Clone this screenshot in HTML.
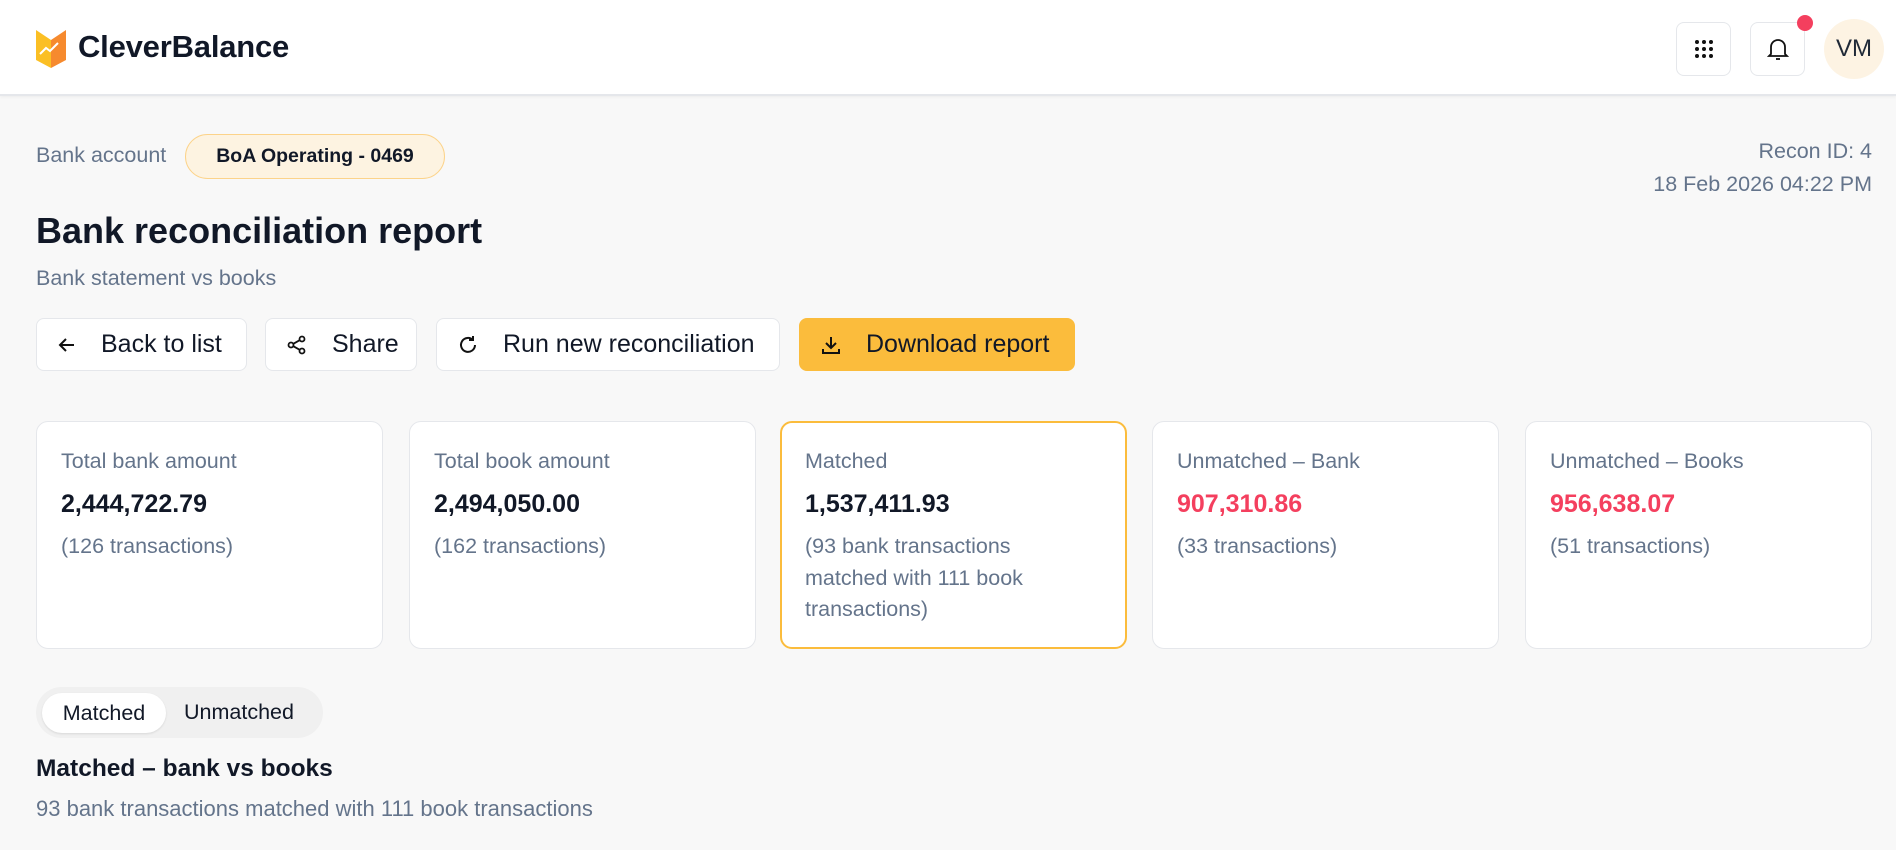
<!DOCTYPE html>
<html><head><meta charset="utf-8"><style>
*{box-sizing:border-box;margin:0;padding:0}
body{width:1896px;height:850px;overflow:hidden;background:#f8f8f8;font-family:"Liberation Sans",sans-serif;color:#111827}
.hdr{position:absolute;left:0;top:0;width:1896px;height:96px;background:#fff;border-bottom:2px solid #e5e7eb;box-shadow:0 1px 3px rgba(0,0,0,.05)}
.abs{position:absolute}
.ib{position:absolute;top:22px;width:55px;height:54px;border:1px solid #e5e7eb;border-radius:8px;background:#fff;display:flex;align-items:center;justify-content:center}
.gray{color:#64748b}
.btn{position:absolute;top:318px;height:53px;border:1px solid #e5e7eb;border-radius:8px;background:#fff;display:flex;align-items:center;font-size:25px;color:#111827}
.btn svg{margin:0 24px 0 20px}
.card{position:absolute;top:421px;width:347px;height:228px;background:#fff;border:1px solid #e5e7eb;border-radius:12px;padding:25px 24px}
.card .l{font-size:21.5px;color:#64748b;margin-top:2px}
.card .v{font-size:25px;font-weight:600;margin-top:16px}
.card .s{font-size:21.5px;color:#64748b;margin-top:12px;line-height:31.5px}
.red{color:#f43f5e}
</style></head><body>
<div class="hdr">
<svg class="abs" style="left:36px;top:30px" width="30" height="38" viewBox="0 0 30 38"><path d="M0 0 L15 10 L15 38 L0 30Z" fill="#fbbf24"/><path d="M15 10 L30 0 L30 30 L15 38Z" fill="#f68a2e"/><path d="M4 24 L10 18 L14 21 L22 13" stroke="#fff" stroke-width="2" fill="none"/></svg>
<div class="abs" style="left:78px;top:29px;font-size:31px;font-weight:700;letter-spacing:-0.2px">CleverBalance</div>
<div class="ib" style="left:1676px"><svg width="20" height="20" viewBox="0 0 20 20" fill="#111">
<circle cx="3" cy="3" r="2"/><circle cx="10" cy="3" r="2"/><circle cx="17" cy="3" r="2"/><circle cx="3" cy="10" r="2"/><circle cx="10" cy="10" r="2"/><circle cx="17" cy="10" r="2"/><circle cx="3" cy="17" r="2"/><circle cx="10" cy="17" r="2"/><circle cx="17" cy="17" r="2"/></svg></div>
<div class="ib" style="left:1750px"><svg width="22" height="24" viewBox="0 0 22 24" fill="none" stroke="#111" stroke-width="1.8"><path d="M4 17 V10 a7 7 0 0 1 14 0 V17 L20 19 H2 Z"/><path d="M9 22 h4"/></svg></div>
<div class="abs" style="left:1797px;top:15px;width:16px;height:16px;border-radius:50%;background:#f43f5e"></div>
<div class="abs" style="left:1824px;top:19px;width:60px;height:60px;border-radius:50%;background:#fdf3e3;display:flex;align-items:center;justify-content:center;font-size:24px;color:#1f2937">VM</div>
</div>
<div class="abs gray" style="left:36px;top:143px;font-size:21.5px">Bank account</div>
<div class="abs" style="left:185px;top:134px;width:260px;height:45px;border:1px solid #fcd38a;background:#fdf3e1;border-radius:23px;display:flex;align-items:center;justify-content:center;font-size:19.5px;font-weight:600">BoA Operating - 0469</div>
<div class="abs gray" style="right:24px;top:135px;font-size:21.5px;text-align:right;line-height:33px">Recon ID: 4<br>18 Feb 2026 04:22 PM</div>
<div class="abs" style="left:36px;top:210px;font-size:36px;font-weight:700">Bank reconciliation report</div>
<div class="abs gray" style="left:36px;top:266px;font-size:21.5px">Bank statement vs books</div>
<div class="btn" style="left:36px;width:211px"><svg width="20" height="20" viewBox="0 0 20 20" fill="none" stroke="#111" stroke-width="2"><path d="M17 10H3M9 4L3 10L9 16"/></svg>Back to list</div>
<div class="btn" style="left:265px;width:152px"><svg width="22" height="22" viewBox="0 0 22 22" fill="none" stroke="#111" stroke-width="1.8"><circle cx="16" cy="5" r="2.5"/><circle cx="5" cy="11" r="2.5"/><circle cx="16" cy="17" r="2.5"/><path d="M7.3 9.8L13.7 6.2M7.3 12.2L13.7 15.8"/></svg>Share</div>
<div class="btn" style="left:436px;width:344px"><svg width="22" height="22" viewBox="0 0 22 22" fill="none" stroke="#111" stroke-width="2"><path d="M18 11a7 7 0 1 1-2-5M16 2v4h-4"/></svg>Run new reconciliation</div>
<div class="btn" style="left:799px;width:276px;background:#fbbc3c;border-color:#fbbc3c"><svg width="22" height="22" viewBox="0 0 22 22" fill="none" stroke="#111" stroke-width="2"><path d="M11 3v11M6 9l5 5 5-5M3 15v4h16v-4"/></svg>Download report</div>
<div class="card" style="left:36px"><div class="l">Total bank amount</div><div class="v">2,444,722.79</div><div class="s">(126 transactions)</div></div>
<div class="card" style="left:409px"><div class="l">Total book amount</div><div class="v">2,494,050.00</div><div class="s">(162 transactions)</div></div>
<div class="card" style="left:780px;border:2px solid #fbbc3c;padding:24px 23px"><div class="l">Matched</div><div class="v">1,537,411.93</div><div class="s">(93 bank transactions<br>matched with 111 book<br>transactions)</div></div>
<div class="card" style="left:1152px"><div class="l">Unmatched – Bank</div><div class="v red">907,310.86</div><div class="s">(33 transactions)</div></div>
<div class="card" style="left:1525px"><div class="l">Unmatched – Books</div><div class="v red">956,638.07</div><div class="s">(51 transactions)</div></div>
<div class="abs" style="left:36px;top:687px;width:287px;height:51px;background:#f0f0f0;border-radius:26px"></div>
<div class="abs" style="left:42px;top:693px;width:124px;height:40px;background:#fff;border-radius:20px;box-shadow:0 1px 2px rgba(0,0,0,.1);display:flex;align-items:center;justify-content:center;font-size:21.5px">Matched</div>
<div class="abs" style="left:184px;top:700px;font-size:21.5px">Unmatched</div>
<div class="abs" style="left:36px;top:755px;font-size:24.5px;font-weight:700">Matched – bank vs books</div>
<div class="abs gray" style="left:36px;top:796px;font-size:22px">93 bank transactions matched with 111 book transactions</div>
</body></html>
